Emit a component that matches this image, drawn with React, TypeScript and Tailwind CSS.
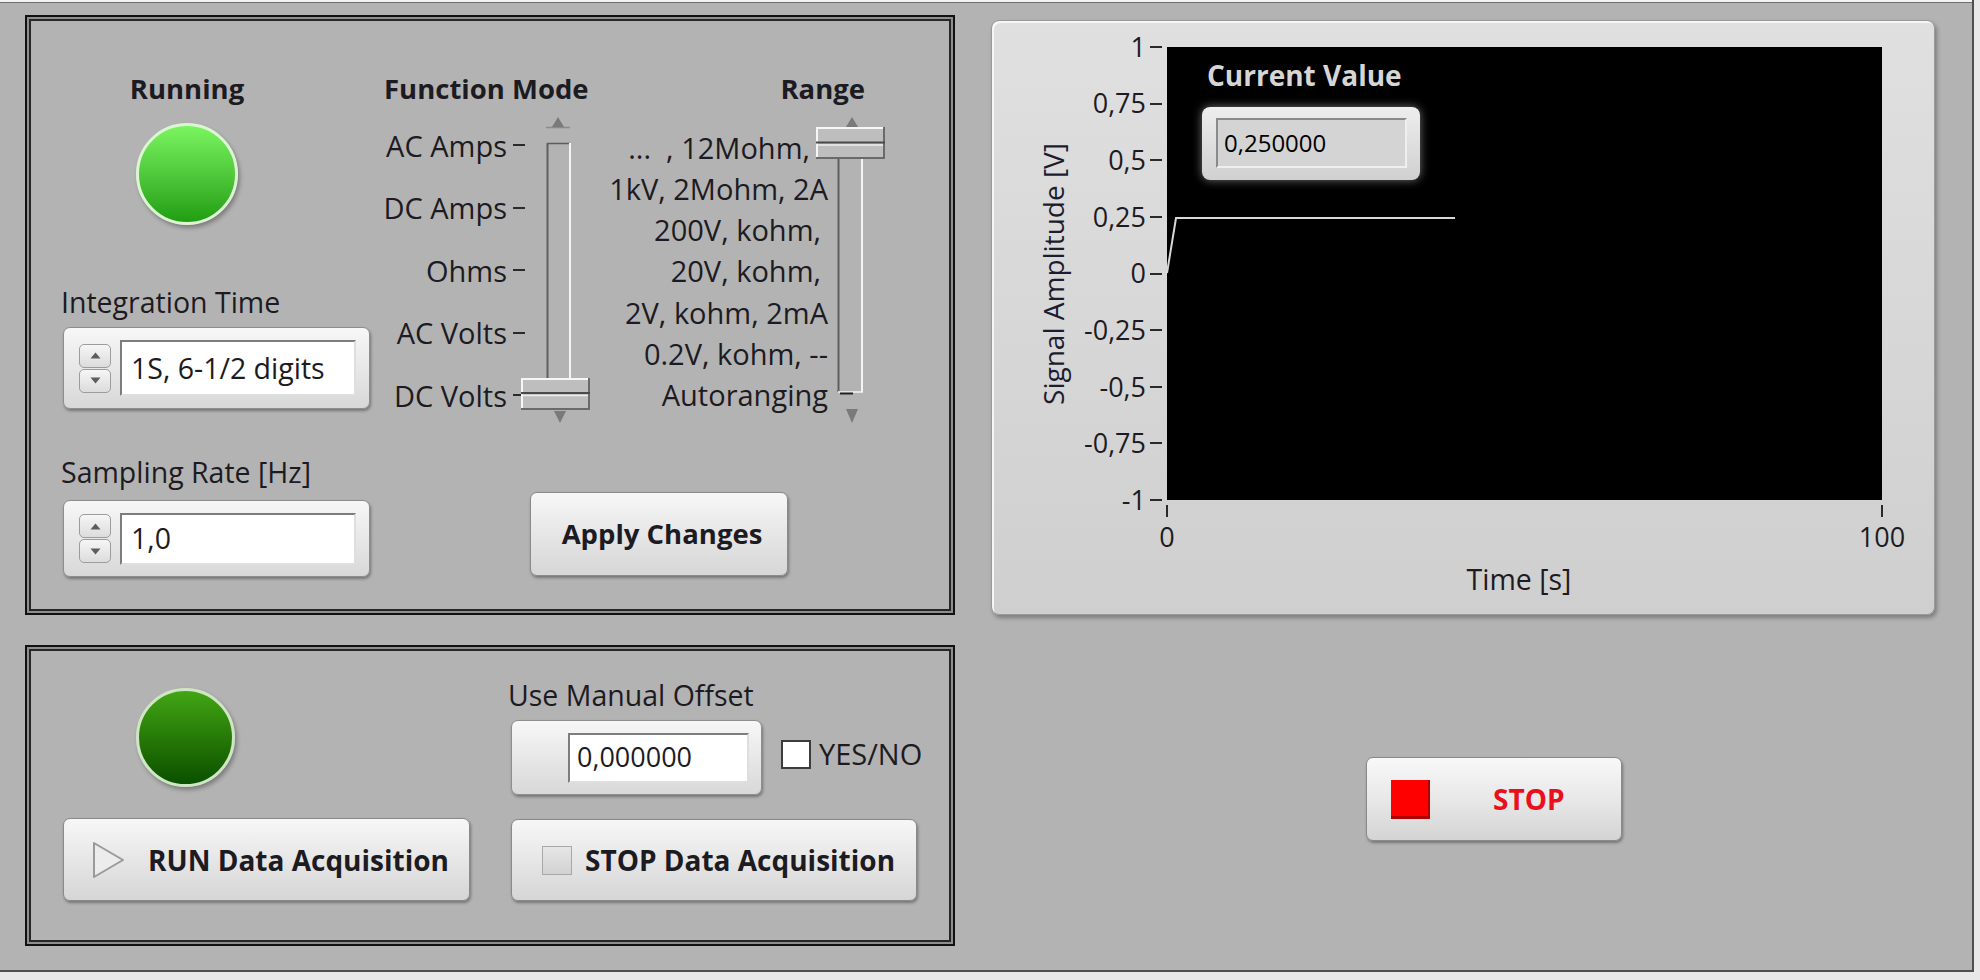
import React from "react";

const Tri = ({ dir }: { dir: "up" | "down" }) => (
  <svg width="11" height="7" viewBox="0 0 11 7">
    {dir === "up" ? (
      <polygon points="0.5,6.5 10.5,6.5 5.5,0.5" fill="#5c5c5c" />
    ) : (
      <polygon points="0.5,0.5 10.5,0.5 5.5,6.5" fill="#5c5c5c" />
    )}
  </svg>
);

function Spinner() {
  return (
    <div className="flex flex-col gap-[1px] w-[32px] shrink-0">
      <div className="h-[24px] rounded-[5px] border border-[#9c9c9c] bg-linear-to-b from-[#f6f6f6] to-[#dcdcdc] flex items-center justify-center">
        <Tri dir="up" />
      </div>
      <div className="h-[24px] rounded-[5px] border border-[#9c9c9c] bg-linear-to-b from-[#f6f6f6] to-[#dcdcdc] flex items-center justify-center">
        <Tri dir="down" />
      </div>
    </div>
  );
}

function Frame({ className, children }: { className: string; children: React.ReactNode }) {
  return (
    <div className={className}>
      <div className="w-full h-full border-2 border-[#262626] bg-[#b3b3b3]">{children}</div>
    </div>
  );
}

function FunctionSlider() {
  return (
    <svg width="67" height="330" viewBox="0 0 67 330" overflow="visible" className="shrink-0">
      <line x1="21" y1="22.5" x2="45" y2="22.5" stroke="#8a8a8a" strokeWidth="1.5" />
      <polygon points="27,22 39,22 33,12" fill="#7a7a7a" />
      <line x1="22.5" y1="38" x2="22.5" y2="287" stroke="#5e5e5e" strokeWidth="2" />
      <line x1="22" y1="38.5" x2="45" y2="38.5" stroke="#5e5e5e" strokeWidth="1.5" />
      <line x1="45" y1="38" x2="45" y2="287" stroke="#f4f4f4" strokeWidth="2" />
      <rect x="-4" y="273" width="69" height="32" fill="#bebebe" />
      <line x1="-4" y1="274" x2="65" y2="274" stroke="#f6f6f6" strokeWidth="2" />
      <line x1="-3" y1="273" x2="-3" y2="305" stroke="#f6f6f6" strokeWidth="2" />
      <line x1="-4" y1="304" x2="65" y2="304" stroke="#6a6a6a" strokeWidth="2" />
      <line x1="64" y1="273" x2="64" y2="305" stroke="#6a6a6a" strokeWidth="2" />
      <line x1="-4" y1="288" x2="65" y2="288" stroke="#4a4a4a" strokeWidth="2" />
      <line x1="-2" y1="290.5" x2="63" y2="290.5" stroke="#ececec" strokeWidth="1.5" />
      <polygon points="29,306 41,306 35,318" fill="#7a7a7a" />
    </svg>
  );
}

function RangeSlider() {
  return (
    <svg width="57" height="330" viewBox="0 0 57 330" overflow="visible" className="shrink-0">
      <polygon points="18,22 30,22 24,12" fill="#7a7a7a" />
      <line x1="10.5" y1="54" x2="10.5" y2="287" stroke="#5e5e5e" strokeWidth="2" />
      <line x1="34" y1="54" x2="34" y2="287" stroke="#f4f4f4" strokeWidth="2" />
      <line x1="10" y1="287" x2="35" y2="287" stroke="#f4f4f4" strokeWidth="1.5" />
      <line x1="12" y1="288.5" x2="25" y2="288.5" stroke="#222" strokeWidth="2" />
      <rect x="-12" y="22" width="69" height="32" fill="#bebebe" />
      <line x1="-12" y1="23" x2="57" y2="23" stroke="#f6f6f6" strokeWidth="2" />
      <line x1="-11" y1="22" x2="-11" y2="54" stroke="#f6f6f6" strokeWidth="2" />
      <line x1="-12" y1="53" x2="57" y2="53" stroke="#6a6a6a" strokeWidth="2" />
      <line x1="56" y1="22" x2="56" y2="54" stroke="#6a6a6a" strokeWidth="2" />
      <line x1="-12" y1="37.5" x2="57" y2="37.5" stroke="#4a4a4a" strokeWidth="2" />
      <line x1="-10" y1="40" x2="55" y2="40" stroke="#ececec" strokeWidth="1.5" />
      <polygon points="18,304 30,304 24,318" fill="#7a7a7a" />
    </svg>
  );
}

const funcModes = ["AC Amps", "DC Amps", "Ohms", "AC Volts", "DC Volts"];
const ranges: { t: string; pad: string }[] = [
  { t: "...  , 12Mohm,", pad: "pr-[18px]" },
  { t: "1kV, 2Mohm, 2A", pad: "pr-0" },
  { t: "200V, kohm,", pad: "pr-[7px]" },
  { t: "20V, kohm,", pad: "pr-[7px]" },
  { t: "2V, kohm, 2mA", pad: "pr-0" },
  { t: "0.2V, kohm, --", pad: "pr-0" },
  { t: "Autoranging", pad: "pr-0" },
];
const yTicks = ["1", "0,75", "0,5", "0,25", "0", "-0,25", "-0,5", "-0,75", "-1"];

export default function App() {
  return (
    <div className="w-[1980px] h-[980px] bg-[#e9e9e9] overflow-hidden font-['Open_Sans',sans-serif] text-[#1d1b22]">
      <div className="w-[1974px] h-[972px] bg-[#b3b3b3] border-r-2 border-b-2 border-[#4f4f4f] flex flex-col">
        <div className="h-[3px] shrink-0 bg-[#f4f4f4] border-b border-[#6e6e6e]" />
        <div className="flex pl-[25px] pt-[12px]">
          {/* Left column */}
          <div className="flex flex-col w-[930px] gap-[30px] shrink-0">
            <Frame className="h-[600px] border-2 border-[#111] bg-[#8e8e8e] p-[2px]">
              <div className="flex pl-[30px] pt-[50px]">
                {/* Column A */}
                <div className="w-[310px] flex flex-col shrink-0">
                  <div className="w-[252px] text-center font-bold text-[27.5px] leading-[36px]">Running</div>
                  <div className="ml-[75px] mt-[16px] w-[102px] h-[102px] rounded-full border-[3px] border-[#dcf5d2] bg-linear-to-b from-[#7af55f] to-[#1f9e10] shadow-[2px_3px_4px_rgba(0,0,0,0.3)]" />
                  <div className="mt-[59px] text-[28.5px] leading-[36px] whitespace-nowrap">Integration Time</div>
                  <div className="ml-[2px] mt-[7px] w-[307px] h-[82px] rounded-[7px] border border-[#8e8e8e] bg-linear-to-b from-[#f7f7f7] to-[#d8d8d8] shadow-[1px_2px_3px_rgba(0,0,0,0.35)] flex items-center pl-[15px] pr-[13px]">
                    <Spinner />
                    <div className="ml-[9px] flex-1 h-[56px] bg-white border-2 border-t-[#7d7d7d] border-l-[#7d7d7d] border-r-[#dedede] border-b-[#dedede] flex items-center pl-[9px] text-[28.5px] whitespace-nowrap">
                      1S, 6-1/2 digits
                    </div>
                  </div>
                  <div className="mt-[45px] text-[28.5px] leading-[36px] whitespace-nowrap">Sampling Rate [Hz]</div>
                  <div className="ml-[2px] mt-[10px] w-[307px] h-[77px] rounded-[7px] border border-[#8e8e8e] bg-linear-to-b from-[#f7f7f7] to-[#d8d8d8] shadow-[1px_2px_3px_rgba(0,0,0,0.35)] flex items-center pl-[15px] pr-[13px]">
                    <Spinner />
                    <div className="ml-[9px] flex-1 h-[52px] bg-white border-2 border-t-[#7d7d7d] border-l-[#7d7d7d] border-r-[#dedede] border-b-[#dedede] flex items-center pl-[9px] text-[28.5px]">
                      1,0
                    </div>
                  </div>
                </div>
                {/* Column B */}
                <div className="ml-[13px] flex flex-col">
                  <div className="flex">
                    <div className="w-[208px] flex flex-col shrink-0">
                      <div className="font-bold text-[27.5px] leading-[36px] whitespace-nowrap">Function Mode</div>
                      <div className="flex items-start -mt-[2px]">
                        <div className="w-[141px] pt-[9px] flex flex-col shrink-0">
                          {funcModes.map((m) => (
                            <div key={m} className="h-[62.5px] flex items-center justify-end text-[29px] whitespace-nowrap">
                              <span>{m}</span>
                              <span className="ml-[6px] w-[12px] h-[2px] bg-[#2a2a2a] shrink-0" />
                            </div>
                          ))}
                        </div>
                        <FunctionSlider />
                      </div>
                    </div>
                    <div className="w-[293px] flex flex-col shrink-0">
                      <div className="flex justify-end pr-[20px] font-bold text-[27.5px] leading-[36px]">Range</div>
                      <div className="flex items-start -mt-[2px]">
                        <div className="w-[236px] pt-[22px] flex flex-col shrink-0">
                          {ranges.map((r) => (
                            <div key={r.t} className={`h-[41.2px] flex items-center justify-end text-[29px] whitespace-pre ${r.pad}`}>
                              {r.t}
                            </div>
                          ))}
                        </div>
                        <RangeSlider />
                      </div>
                    </div>
                  </div>
                  <div className="mt-[57px] ml-[146px] w-[258px] h-[84px] rounded-[7px] border border-[#8a8a8a] bg-linear-to-b from-[#f7f7f7] to-[#d6d6d6] shadow-[1px_2px_3px_rgba(0,0,0,0.35)] flex items-center justify-center pl-[6px] font-bold text-[27.5px]">
                    Apply Changes
                  </div>
                </div>
              </div>
            </Frame>

            <Frame className="h-[301px] border-2 border-[#111] bg-[#8e8e8e] p-[2px]">
              <div className="flex pl-[32px]">
                <div className="w-[407px] flex flex-col pt-[37px] shrink-0">
                  <div className="ml-[73px] w-[99px] h-[99px] rounded-full border-[3px] border-[#cfe6c4] bg-linear-to-b from-[#42a614] to-[#0a5000] shadow-[2px_3px_4px_rgba(0,0,0,0.3)]" />
                  <div className="mt-[31px] w-[407px] h-[83px] rounded-[7px] border border-[#8a8a8a] bg-linear-to-b from-[#f7f7f7] to-[#d6d6d6] shadow-[1px_2px_3px_rgba(0,0,0,0.35)] flex items-center pl-[28px]">
                    <svg width="34" height="38" viewBox="0 0 34 38" className="shrink-0">
                      <polygon points="2,2 31,19 2,36" fill="#ececec" stroke="#9a9a9a" strokeWidth="2" strokeLinejoin="round" />
                    </svg>
                    <span className="ml-[22px] font-bold text-[28px] whitespace-nowrap">RUN Data Acquisition</span>
                  </div>
                </div>
                <div className="ml-[38px] flex flex-col pt-[26px]">
                  <div className="text-[28.5px] leading-[36px] whitespace-nowrap">Use Manual Offset</div>
                  <div className="mt-[7px] flex items-center">
                    <div className="ml-[3px] w-[251px] h-[75px] rounded-[7px] border border-[#8e8e8e] bg-linear-to-b from-[#f7f7f7] to-[#d8d8d8] shadow-[1px_2px_3px_rgba(0,0,0,0.35)] flex items-center pl-[56px] pr-[12px]">
                      <div className="flex-1 h-[50px] bg-white border-2 border-t-[#7d7d7d] border-l-[#7d7d7d] border-r-[#dedede] border-b-[#dedede] flex items-center pl-[7px] text-[27px]">
                        0,000000
                      </div>
                    </div>
                    <div className="ml-[19px] -mt-[6px] w-[30px] h-[29px] bg-white border-2 border-[#3c3c3c] shrink-0" />
                    <span className="ml-[8px] -mt-[8px] text-[29px] whitespace-nowrap">YES/NO</span>
                  </div>
                  <div className="mt-[24px] ml-[3px] w-[406px] h-[82px] rounded-[7px] border border-[#8a8a8a] bg-linear-to-b from-[#f7f7f7] to-[#d6d6d6] shadow-[1px_2px_3px_rgba(0,0,0,0.35)] flex items-center pl-[30px]">
                    <div className="w-[30px] h-[29px] bg-linear-to-b from-[#e6e6e6] to-[#d2d2d2] border border-[#a8a8a8] shrink-0" />
                    <span className="ml-[13px] font-bold text-[28px] whitespace-nowrap">STOP Data Acquisition</span>
                  </div>
                </div>
              </div>
            </Frame>
          </div>

          {/* Right column */}
          <div className="ml-[36px] flex flex-col pt-[5px]">
            <div className="w-[944px] h-[595px] rounded-[8px] border border-[#9a9a9a] bg-linear-to-b from-[#e0e0e0] to-[#cfcfcf] shadow-[inset_2px_2px_0_#f6f6f6,2px_3px_4px_rgba(0,0,0,0.3)] pt-[26px] flex flex-col">
              <div className="flex">
                <div className="w-[98px] h-[453px] pl-[23px] flex items-center justify-center shrink-0">
                  <span className="-rotate-90 whitespace-nowrap text-[28px] leading-[36px] text-[#1c1c30]">Signal Amplitude [V]</span>
                </div>
                <div className="w-[77px] h-[453px] flex flex-col justify-between shrink-0">
                  {yTicks.map((t) => (
                    <div key={t} className="h-0 flex items-center justify-end pr-[5px] text-[27px] whitespace-nowrap">
                      <span>{t}</span>
                      <span className="ml-[4px] w-[12px] h-[2px] bg-[#2a2a2a] shrink-0" />
                    </div>
                  ))}
                </div>
                <div className="relative w-[715px] h-[453px] bg-black shrink-0">
                  <svg className="absolute inset-0" width="715" height="453" viewBox="0 0 715 453">
                    <polyline points="0,226 9,171 288,171" fill="none" stroke="#d8d8d8" strokeWidth="2" />
                  </svg>
                  <div className="absolute left-[40px] top-[10px] font-bold text-[28px] leading-[36px] text-[#d6d6d6] whitespace-nowrap">
                    Current Value
                  </div>
                  <div className="absolute left-[35px] top-[60px] w-[218px] h-[73px] rounded-[8px] bg-linear-to-b from-[#eeeeee] to-[#d0d0d0] shadow-[0_0_10px_rgba(255,255,255,0.45)] pt-[11px] pl-[14px]">
                    <div className="w-[191px] h-[50px] bg-[#d4d4d4] border-2 border-t-[#8a8a8a] border-l-[#8a8a8a] border-r-[#efefef] border-b-[#efefef] flex items-center pl-[6px] text-[24px] text-black">
                      0,250000
                    </div>
                  </div>
                </div>
              </div>
              <div className="ml-[175px] w-[715px] flex justify-between">
                <div className="w-0 flex flex-col items-center">
                  <div className="mt-[5px] w-[2px] h-[12px] bg-[#2a2a2a] shrink-0" />
                  <div className="mt-[6px] text-[27px] leading-[28px]">0</div>
                </div>
                <div className="w-0 flex flex-col items-center">
                  <div className="mt-[5px] w-[2px] h-[12px] bg-[#2a2a2a] shrink-0" />
                  <div className="mt-[6px] text-[27px] leading-[28px]">100</div>
                </div>
              </div>
              <div className="ml-[175px] w-[715px] pr-[11px] mt-[10px] text-center text-[28.5px] leading-[36px]">Time [s]</div>
            </div>
            <div className="mt-[142px] ml-[375px] w-[256px] h-[84px] rounded-[7px] border border-[#8a8a8a] bg-linear-to-b from-[#f8f8f8] via-[#e8e8e8] to-[#d4d4d4] shadow-[1px_2px_3px_rgba(0,0,0,0.35)] flex items-center pl-[24px]">
              <div className="w-[39px] h-[39px] bg-[#ff0000] border-b-[3px] border-r-[2px] border-[#b00000] shrink-0" />
              <span className="ml-[63px] font-bold text-[28px] text-[#e8101c]">STOP</span>
            </div>
          </div>
        </div>
      </div>
    </div>
  );
}
